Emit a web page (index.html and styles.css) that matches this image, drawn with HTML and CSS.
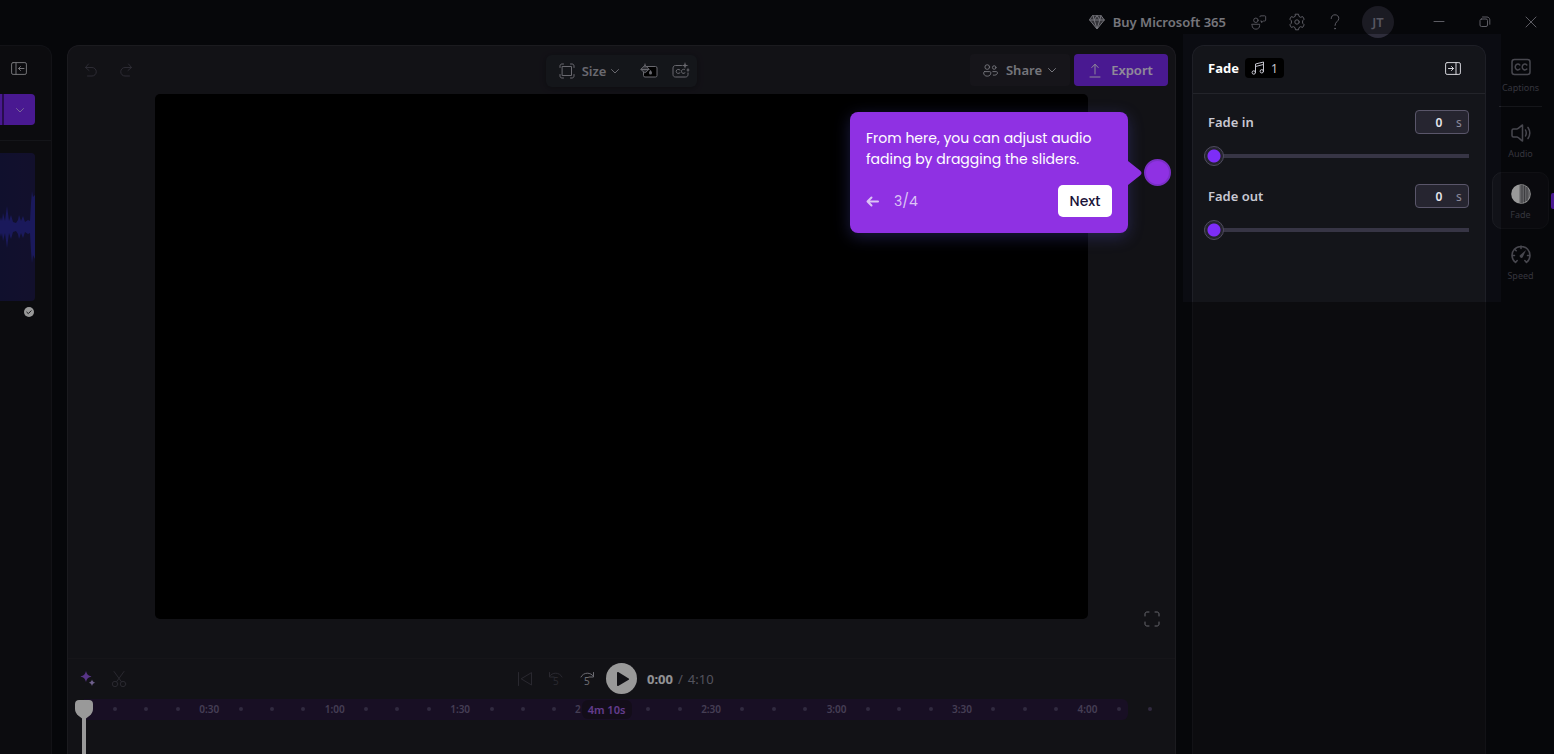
FILE: index.html
```html
<!DOCTYPE html>
<html lang="en">
<head>
  <meta charset="UTF-8">
  <title>Video Editor | Fade</title>
  <link rel="stylesheet" href="styles.css">
</head>
<body>
  <header class="topbar">
    <a class="buy" href="#">
      <svg width="16" height="16" viewBox="0 0 16 16"><path d="M4 1.5h8L15.300 6 8 15 .7 6z"/><path d="M.7 6h14.600M4 1.500L5.200 6 8 15l2.800-9L12 1.500M5.200 6L8 1.500 10.800 6"/></svg>
      Buy Microsoft 365
    </a>
    <button class="top-icon" aria-label="Feedback">
      <svg width="16" height="17" viewBox="0 0 18 18"><circle cx="5.500" cy="6.500" r="2.500"/><path d="M1.200 11h8.500v1.500c0 2.500-1.800 4-4.200 4s-4.300-1.500-4.300-4z"/><path d="M10 2.500c0-.6.4-1 1-1h4.500c.6 0 1 .4 1 1v3.800c0 .6-.4 1-1 1h-1.300L11.800 9V7.300H11"/></svg>
    </button>
    <button class="top-icon" aria-label="Settings">
      <svg width="18" height="18" viewBox="0 0 18 18"><path d="M7.500 1.200h3l.5 2.200 1.500.9 2.200-.7 1.500 2.600-1.600 1.600v2.400l1.600 1.600-1.500 2.600-2.200-.7-1.500.9-.5 2.200h-3L7 14.600l-1.500-.9-2.200.7-1.500-2.600 1.600-1.600V7.800L1.800 6.200l1.500-2.600 2.200.7L7 3.400z"/><circle cx="9" cy="9" r="2.200"/></svg>
    </button>
    <button class="top-icon" aria-label="Help">
      <svg width="18" height="18" viewBox="0 0 18 18"><path d="M5.200 5.500c0-2.200 1.500-3.700 3.800-3.700s3.800 1.500 3.800 3.600c0 3-3.800 3.300-3.800 7"/><circle cx="9" cy="15.600" r=".5"/></svg>
    </button>
    <button class="avatar">JT</button>
    <button class="win" aria-label="Minimize"><svg width="12" height="12" viewBox="0 0 12 12"><path d="M1 5.500h10"/></svg></button>
    <button class="win" aria-label="Restore"><svg width="12" height="12" viewBox="0 0 12 12"><rect x="1" y="3" width="7.500" height="7.500" rx="1.500"/><path d="M3.500 1h4.500c1.500 0 2.800 1.200 2.800 2.800v4.500"/></svg></button>
    <button class="win" aria-label="Close"><svg width="12" height="12" viewBox="0 0 12 12"><path d="M1 1l10 10M11 1L1 11"/></svg></button>
  </header>

  <div class="workspace">
    <aside class="media">
      <div class="media-head">
        <button class="icon-btn" aria-label="Collapse panel">
          <svg width="16" height="13" viewBox="0 0 16 13"><rect x=".6" y=".6" width="14.800" height="11.800" rx="1.500"/><path d="M5 .6v11.800M13 6.500H7.500M9.500 4.500l-2 2 2 2"/></svg>
        </button>
      </div>
      <div class="import">
        <button class="import-more" aria-label="Import options"><svg width="10" height="10" viewBox="0 0 10 10"><path d="M1.500 3.500L5 7l3.500-3.500"/></svg></button>
      </div>
      <div class="clip">
        <svg width="35" height="148" viewBox="0 0 35 148"><path d="M0 68L1 64 2 68 3 60 5 68 7 53 9 68 11 62 13 69 16 70 18 67 19 62 21 68 23 63 25 69 28 67 30 68 31 50 32 38 33 44 35 42V106L33 102 32 110 31 98 30 80 28 81 25 79 23 85 21 80 19 86 18 81 16 78 13 79 11 86 9 80 7 95 5 80 3 88 2 80 1 84 0 80z"/></svg>
      </div>
      <svg class="check" width="10" height="10" viewBox="0 0 10 10"><circle cx="5" cy="5" r="5"/><path d="M2.800 5.200l1.500 1.400 2.800-2.800"/></svg>
    </aside>

    <main class="editor">
      <div class="editor-head">
        <div class="history">
          <button class="square off" aria-label="Undo"><svg width="14" height="14" viewBox="0 0 14 14"><path d="M4.500 1L1.500 4.500l3.500 3M1.500 4.500h6.500a4.200 4.200 0 0 1 0 8.500H3.500"/></svg></button>
          <button class="square off" aria-label="Redo"><svg width="14" height="14" viewBox="0 0 14 14"><path d="M9.500 1l3 3.500-3.500 3M12.500 4.500H6a4.200 4.200 0 0 0 0 8.500h4.500"/></svg></button>
        </div>
        <div class="tools">
          <button class="size">
            <svg width="16" height="16" viewBox="0 0 16 16"><rect x="3.500" y="3.500" width="9" height="9"/><path d="M1 4.500V3c0-1.200.8-2 2-2h1.500M11.500 1H13c1.200 0 2 .8 2 2v1.500M15 11.500V13c0 1.200-.8 2-2 2h-1.500M4.500 15H3c-1.200 0-2-.8-2-2v-1.500"/></svg>
            Size
            <svg width="10" height="10" viewBox="0 0 10 10"><path d="M1.500 3.500L5 7l3.500-3.500"/></svg>
          </button>
          <button class="square" aria-label="Background">
            <svg width="18" height="16" viewBox="0 0 18 16"><rect x="3.500" y="3.500" width="13.500" height="10.500" rx="1.500" fill="#000"/><path d="M1.200 6L5 2.200 9 6.200 5.600 9.500c-.4.400-1 .400-1.400 0L1.200 6.800c-.3-.3-.3-.5 0-.8z" fill="#4a4b54"/><path d="M5 4V1M1.500 6.500H9"/><path class="solid" d="M10.500 7c.8 1.200 1.500 2 1.500 2.900a1.500 1.500 0 0 1-3 0c0-.9.7-1.700 1.500-2.900z"/></svg>
          </button>
          <button class="square" aria-label="Auto captions">
            <svg width="18" height="18" viewBox="0 0 18 18"><path d="M9.500 3.500H3.500c-1.400 0-2.500 1-2.500 2.500v6.500C1 14 2 15 3.500 15h10c1.500 0 2.500-1 2.500-2.500v-1.500"/><path d="M8 8c-1.300-1.300-3.800-.8-3.800 1.400S6.700 12 8 10.800M13 10.800c-1.300 1.200-3.500.8-3.500-1.400 0-1.800 1.700-2.600 3-1.900"/><path class="solid" d="M13 0l.8 2.700 2.700.8-2.700.8L13 7l-.8-2.700-2.700-.8 2.700-.8zM16 5.500l.6 1.900 1.400.6-1.400.6-.6 1.900-.6-1.900L14 8l1.400-.6z"/></svg>
          </button>
        </div>
        <div class="actions">
          <button class="share">
            <svg width="15" height="13" viewBox="0 0 16 14"><circle cx="4.500" cy="3.300" r="2.500"/><circle cx="12" cy="3.800" r="1.900"/><path d="M1.800 8.200h5.400c.7 0 1.200.5 1.200 1.200 0 2.200-1.500 3.700-3.900 3.700S.6 11.600.6 9.400c0-.7.500-1.200 1.200-1.200zM10.500 8.200h3.800c.7 0 1.200.5 1.200 1.200 0 2-1.800 3-4.500 2.600"/></svg>
            Share
            <svg class="chev" width="10" height="10" viewBox="0 0 10 10"><path d="M1.500 3.500L5 7l3.500-3.500"/></svg>
          </button>
          <button class="export">
            <svg width="12" height="15" viewBox="0 0 12 15"><path d="M6 11V1.500M2.800 4.500L6 1.200l3.200 3.300M1 14h10"/></svg>
            Export
          </button>
        </div>
      </div>

      <div class="stage">
        <div class="canvas"></div>
        <button class="fullscreen" aria-label="Fullscreen"><svg width="16" height="16" viewBox="0 0 16 16"><path d="M1 5V3c0-1.200.8-2 2-2h2M11 1h2c1.200 0 2 .8 2 2v2M15 11v2c0 1.200-.8 2-2 2h-2M5 15H3c-1.200 0-2-.8-2-2v-2"/></svg></button>
      </div>

      <section class="timeline">
        <div class="transport">
          <div class="transport-left">
            <button class="ctl" aria-label="AI tools"><svg class="sparkle" width="16" height="16" viewBox="0 0 16 16"><path d="M6 0c1 3.500 2 4.500 5.500 5.500C8 6.500 7 7.500 6 11 5 7.500 4 6.500.5 5.500 4 4.500 5 3.500 6 0z"/><path class="light" d="M12 8.500c.6 2 1.200 2.600 3.200 3.200-2 .6-2.600 1.200-3.200 3.200-.6-2-1.200-2.600-3.200-3.200 2-.6 2.600-1.200 3.200-3.200z"/></svg></button>
            <button class="ctl off" aria-label="Split"><svg width="16" height="18" viewBox="0 0 16 18"><circle cx="4" cy="14" r="2.700"/><circle cx="12" cy="14" r="2.700"/><path d="M3 1.500l7.500 10.300M13 1.500L5.500 11.800"/></svg></button>
            <button class="ctl off push" aria-label="Skip to start"><svg width="16" height="16" viewBox="0 0 16 16"><path d="M1.500 1.500v13M14.500 2v12L4.500 8z"/></svg></button>
            <button class="ctl off" aria-label="Back 5 seconds"><svg width="16" height="20" viewBox="0 0 16 20"><path d="M1.500 3.500V8H6M1.500 7.500C4 3 11.500 2.800 14 8"/><text x="5" y="16">5</text></svg></button>
            <button class="ctl" aria-label="Forward 5 seconds"><svg width="16" height="20" viewBox="0 0 16 20"><path d="M14.500 3.500V8H10M14.500 7.500C12 3 4.500 2.800 2 8"/><text x="5" y="16">5</text></svg></button>
          </div>
          <button class="play" aria-label="Play"><svg width="14" height="16" viewBox="0 0 14 16"><path d="M1 1.800v12.400c0 .7.600 1 1.200.7l10.500-6.200c.5-.3.5-1 0-1.300L2.200 1.100C1.600.8 1 1.100 1 1.800z"/></svg></button>
          <div class="time"><b>0:00</b><span>/</span><span>4:10</span></div>
        </div>
        <div class="ruler">
          <div class="range"></div>
          <ol class="ticks" id="ticks"></ol>
          <span class="duration">4m 10s</span>
        </div>
        <div class="playhead">
          <svg width="18" height="20" viewBox="0 0 18 20"><path d="M4 0h10c2.400 0 4 1.600 4 4v5c0 3-1.500 5-3.500 6.800L9 20l-5.500-4.200C1.500 14 0 12 0 9V4c0-2.400 1.600-4 4-4z"/></svg>
        </div>
      </section>
    </main>

    <aside class="props">
      <div class="props-head">
        <h2>Fade</h2>
        <span class="count">
          <svg width="14" height="14" viewBox="0 0 14 14"><path d="M4.500 11.500V3l8-2v9M4.500 5.500l8-2"/><circle cx="2.800" cy="11.500" r="1.700"/><circle cx="10.800" cy="10.300" r="1.700"/></svg>
          1
        </span>
        <button class="icon-btn" aria-label="Collapse panel">
          <svg width="16" height="13" viewBox="0 0 16 13"><rect x=".6" y=".6" width="14.800" height="11.800" rx="1.500"/><path d="M11 .6v11.800M3.500 6.500h5M6.500 4.500l2 2-2 2"/></svg>
        </button>
      </div>
      <div class="field">
        <div class="field-row">
          <label for="fadeIn">Fade in</label>
          <span class="num"><input type="text" id="fadeInValue" value="0" aria-label="Fade in seconds">s</span>
        </div>
        <input type="range" id="fadeIn" min="0" max="5" step="0.1" value="0">
      </div>
      <div class="field">
        <div class="field-row">
          <label for="fadeOut">Fade out</label>
          <span class="num"><input type="text" id="fadeOutValue" value="0" aria-label="Fade out seconds">s</span>
        </div>
        <input type="range" id="fadeOut" min="0" max="5" step="0.1" value="0">
      </div>
    </aside>

    <nav class="rail">
      <button class="rail-item">
        <svg width="20" height="20" viewBox="0 0 20 20"><rect x="1" y="2.500" width="18" height="15" rx="2.500"/><path d="M8.800 8c-1.500-1.600-4.600-1-4.600 2s3.100 3.600 4.600 2M15.800 8c-1.500-1.600-4.600-1-4.600 2s3.100 3.600 4.600 2"/></svg>
        Captions
      </button>
      <hr>
      <button class="rail-item">
        <svg width="20" height="20" viewBox="0 0 20 20"><path d="M11.500 2v16c-2-1-3.500-3.700-5.500-4H2.500c-.9 0-1.500-.6-1.500-1.500v-5C1 6.600 1.600 6 2.500 6H6c2-.3 3.500-3 5.500-4zM14.500 7c1 2 1 4 0 6M17 4.500c2.300 3.500 2.300 7.500 0 11"/></svg>
        Audio
      </button>
      <button class="rail-item active">
        <svg width="20" height="20" viewBox="0 0 20 20"><circle cx="10" cy="10" r="9.800"/><path class="shade" d="M8.500 1.200A9 9 0 0 1 10 1a9 9 0 0 1 0 18 9 9 0 0 1-1.500-.2z"/><path d="M11 1v18M13.500 2v16M16 3.500v13"/></svg>
        Fade
      </button>
      <button class="rail-item">
        <svg width="20" height="20" viewBox="0 0 20 20"><path d="M4.500 17.500a9 9 0 1 1 11 0l-1.700-2M4.500 17.500l1.700-2M10 1v2.500M3.500 4l1.700 1.700M1 10.500h2.500M16.500 10.500H19"/><path class="needle" d="M15 5l-3.300 7.300c-1 1.500-3.500.3-3-1.700z"/></svg>
        Speed
      </button>
    </nav>
  </div>

  <!-- guided tour -->
  <div class="spotlight"></div>
  <div class="tour" role="dialog" aria-label="Tour step">
    <p>From here, you can adjust audio fading by dragging the sliders.</p>
    <div class="tour-foot">
      <button class="back" aria-label="Previous step"><svg width="13" height="11" viewBox="0 0 13 11"><path d="M12 5.500H1.500M5.500 1.500l-4 4 4 4"/></svg></button>
      <span>3/4</span>
      <button class="next">Next</button>
    </div>
    <svg class="arrow" width="14" height="24" viewBox="0 0 14 24"><path d="M0 0l12 9.500c2 1.500 2 3.500 0 5L0 24z"/></svg>
  </div>
  <div class="hotspot"></div>

  <script>
    // one cell per 7.5 seconds, every fourth one carries a time
    const ticks = document.getElementById("ticks");
    for (let i = 0; i < 35; i++) {
      const li = document.createElement("li");
      if (i === 16) {
        // the duration badge sits over the rest of this one
        li.textContent = "2";
        li.className = "cut";
      } else if (i > 0 && i % 4 === 0) {
        const sec = i * 7.5;
        li.textContent = Math.floor(sec / 60) + ":" + String(sec % 60).padStart(2, "0");
      } else if (i > 0) {
        li.className = "dot";
      }
      ticks.appendChild(li);
    }

    ["fadeIn", "fadeOut"].forEach(function (id) {
      const slider = document.getElementById(id);
      slider.addEventListener("input", function () {
        document.getElementById(id + "Value").value = slider.value;
      });
    });
  </script>
</body>
</html>
```

FILE: styles.css
```css
* {
  box-sizing: border-box;
}

body {
  margin: 0;
  height: 100vh;
  overflow: hidden;
  position: relative;
  display: flex;
  flex-direction: column;
  background: #0b0c12;
  color: #fff;
  font-family: 'Segoe UI', 'Noto Sans', sans-serif;
  font-size: 13px;
}

button {
  display: flex;
  align-items: center;
  justify-content: center;
  padding: 0;
  border: none;
  background: none;
  color: inherit;
  font: inherit;
  cursor: pointer;
}

svg {
  display: block;
  flex: none;
  fill: none;
  stroke: currentColor;
  stroke-linecap: round;
  stroke-linejoin: round;
}

/* top bar */
.topbar {
  flex: none;
  display: flex;
  align-items: center;
  justify-content: flex-end;
  height: 45px;
  padding-bottom: 1px;
  color: #9a9aa6;
}

.buy {
  display: flex;
  align-items: center;
  gap: 8px;
  margin-right: 14px;
  color: #c4c4ce;
  font-weight: 600;
  text-decoration: none;
}

.buy svg {
  fill: #55555e;
}

.top-icon {
  width: 38px;
  height: 32px;
}

.avatar {
  width: 32px;
  height: 32px;
  margin: 0 22px 0 8px;
  border-radius: 50%;
  background: #2e2d3b;
  color: #9090a0;
  font-weight: 600;
}

.win {
  width: 46px;
  height: 32px;
}

/* layout */
.workspace {
  flex: 1;
  min-height: 0;
  display: flex;
}

.media,
.props {
  flex: none;
  background: #14151a;
  border: 1px solid #1e1f26;
  border-bottom: none;
}

.media {
  width: 52px;
  margin-right: 15px;
  border-left: none;
  border-radius: 0 12px 0 0;
}

.media-head {
  display: flex;
  align-items: center;
  height: 48px;
  padding: 0 0 3px 11px;
  color: #c0c0c6;
}

.import {
  height: 47px;
  padding-right: 16px;
  border-bottom: 1px solid #22232a;
}

.import-more {
  width: 35px;
  height: 31px;
  padding-left: 4px;
  border-radius: 0 4px 4px 0;
  background: linear-gradient(90deg, #7b2bf2 2px, #431683 2px, #431683 4px, #7b2bf2 4px);
  color: #c9a8ff;
}

.clip {
  width: 35px;
  height: 148px;
  margin-top: 12px;
  border-radius: 0 4px 4px 0;
  overflow: hidden;
  background: linear-gradient(90deg, #1c1b4c, #1f1c4a);
}

.clip svg {
  fill: #2c2b98;
  stroke: none;
}

.check {
  margin: 6px 0 0 24px;
  fill: #fff;
  stroke: none;
}

.check path {
  fill: none;
  stroke: #22232a;
}

/* editor */
.editor {
  flex: 1;
  min-width: 0;
  display: flex;
  flex-direction: column;
  background: #1f1e26;
  border: 1px solid #2e2d35;
  border-bottom: none;
  border-radius: 12px 12px 0 0;
}

.editor-head {
  display: grid;
  grid-template-columns: 1fr auto 1fr;
  align-items: center;
  height: 48px;
  padding: 0 7px;
}

.history {
  display: flex;
  gap: 3px;
}

.square {
  width: 32px;
  height: 32px;
}

.off {
  color: #4a4956;
}

.tools {
  display: flex;
  margin-top: 2px;
  border-radius: 6px;
  background: #22252c;
  color: #b0b0ba;
  box-shadow: 0 1px 6px rgba(0, 0, 0, 0.3);
}

.size {
  gap: 7px;
  width: 87px;
  height: 32px;
  font-weight: 600;
}

.size svg:last-child,
.chev {
  margin-left: -3px;
}

.solid {
  fill: currentColor;
  stroke: none;
}

.actions {
  display: flex;
  justify-content: flex-end;
  gap: 4px;
}

.share,
.export {
  gap: 8px;
  height: 32px;
  border-radius: 4px;
  font-weight: 600;
}

.share {
  width: 100px;
  background: #25242c;
  color: #c4c4ce;
}

.export {
  gap: 10px;
  width: 94px;
  background: #7b2bf2;
  color: #f0e6ff;
}

.stage {
  position: relative;
  padding: 0 87px 39px;
}

.canvas {
  aspect-ratio: 16 / 9;
  border-radius: 5px;
  background: #000;
}

.fullscreen {
  position: absolute;
  right: 15px;
  bottom: 31px;
  color: #aaaab4;
}

/* timeline */
.timeline {
  position: relative;
  flex: 1;
  border-top: 1px solid #25242b;
}

.transport {
  display: grid;
  grid-template-columns: 1fr auto 1fr;
  align-items: center;
  height: 40px;
}

.transport-left {
  display: flex;
  padding: 0 4px;
  color: #b4b4be;
}

.ctl {
  width: 31px;
  height: 31px;
}

.ctl.off {
  color: #45444f;
}

.ctl text {
  fill: currentColor;
  stroke: none;
  font-size: 10px;
}

.push {
  margin-left: auto;
}

.sparkle {
  fill: #9257e0;
  stroke: none;
}

.sparkle .light {
  fill: #b9a0ea;
}

.play {
  width: 31px;
  height: 31px;
  border-radius: 50%;
  background: #fff;
}

.play svg {
  margin-left: 3px;
  fill: #1f1e26;
  stroke: none;
}

.time {
  display: flex;
  gap: 5px;
  padding-left: 10px;
  color: #8a8a9a;
}

.time b {
  color: #f4f4f8;
}

.ruler {
  position: relative;
  height: 21px;
  padding-right: 9px;
}

.range {
  position: absolute;
  inset: 0 47px 0 16px;
  border-radius: 0 6px 6px 0;
  background: #29193c;
}

.ticks {
  position: relative;
  display: grid;
  grid-template-columns: repeat(35, minmax(0, 1fr));
  margin: 0;
  padding: 0;
  list-style: none;
  line-height: 21px;
  font-size: 10px;
  font-weight: 600;
  color: #74688c;
}

.ticks li {
  display: flex;
  align-items: center;
  justify-content: center;
}

.ticks .cut {
  justify-content: flex-start;
  padding-left: 5px;
}

.dot::before {
  content: "";
  width: 4px;
  height: 4px;
  border-radius: 50%;
  background: #51466a;
}

.duration {
  position: absolute;
  top: 1px;
  left: calc(50% - 40px);
  width: 50px;
  border-radius: 6px;
  background: #20172b;
  color: #a865e8;
  font-size: 11px;
  font-weight: 600;
  line-height: 19px;
  text-align: center;
}

.playhead {
  position: absolute;
  top: 41px;
  bottom: 0;
  left: 7px;
  width: 18px;
  background: linear-gradient(#fff, #fff) center / 4px 100% no-repeat;
}

.playhead svg {
  fill: #fff;
  stroke: none;
}

/* properties panel */
.props {
  width: 294px;
  margin-left: 16px;
  border-radius: 12px 12px 0 0;
}

.props-head {
  display: flex;
  align-items: center;
  height: 48px;
  padding: 0 24px 3px 15px;
  border-bottom: 1px solid #23242a;
}

.props-head h2 {
  margin: 0 6px 0 0;
  font-size: 13px;
}

.props-head .icon-btn {
  margin-left: auto;
  color: #d4d4da;
}

.count {
  display: flex;
  align-items: center;
  gap: 6px;
  height: 20px;
  padding: 0 6px;
  border-radius: 4px;
  background: #000;
  color: #c4c4ce;
  font-size: 12px;
}

.field {
  height: 74px;
  padding: 16px 16px 0 15px;
}

.field-row {
  display: flex;
  align-items: center;
  justify-content: space-between;
  height: 24px;
  color: #c8c8d2;
}

.field label {
  font-weight: 600;
}

.num {
  display: flex;
  align-items: center;
  width: 54px;
  height: 24px;
  padding-right: 6px;
  border: 1px solid #5a566a;
  border-radius: 4px;
  background: #262530;
  color: #8c8a9c;
  font-size: 12px;
}

.num input {
  width: 40px;
  padding: 0 0 0 6px;
  border: none;
  background: none;
  color: #e4e4ea;
  font: inherit;
  font-weight: 600;
  text-align: center;
}

input[type="range"] {
  -webkit-appearance: none;
  appearance: none;
  display: block;
  width: calc(100% + 4px);
  height: 20px;
  margin: 12px 0 0 -4px;
  background: linear-gradient(#373545, #373545) center / 100% 4px no-repeat;
}

input[type="range"]::-webkit-slider-thumb {
  -webkit-appearance: none;
  width: 20px;
  height: 20px;
  border: 1px solid #4f4c5e;
  border-radius: 50%;
  background: radial-gradient(circle, #7d2df8 6px, #24232e 7px);
}

/* right rail */
.rail {
  flex: none;
  display: flex;
  flex-direction: column;
  gap: 4px;
  width: 68px;
  padding: 0 5px 0 6px;
}

.rail hr {
  width: 43px;
  height: 1px;
  margin: 0 auto;
  border: none;
  background: #24252c;
}

.rail-item {
  position: relative;
  flex-direction: column;
  gap: 4px;
  height: 57px;
  padding-top: 4px;
  border: 1px solid transparent;
  border-radius: 10px;
  color: #595966;
  font-size: 9px;
}

.rail-item svg {
  color: #777783;
  stroke-width: 1.5;
}

.rail-item.active {
  background: #111218;
  border-color: #1b1c22;
}

.rail-item.active svg {
  fill: #fff;
  stroke: #66666c;
  stroke-width: 1;
}

.rail-item.active circle {
  stroke: none;
}

.shade {
  fill: #a4a4a8;
  stroke: none;
}

.rail-item.active::after {
  content: "";
  position: absolute;
  top: 20px;
  right: -6px;
  width: 3px;
  height: 16px;
  border-radius: 2px 0 0 2px;
  background: #7b2bf2;
}

.needle {
  fill: currentColor;
  stroke: none;
}

/* tour */
.spotlight {
  position: absolute;
  top: 34px;
  right: 53px;
  width: 318px;
  height: 268px;
  box-shadow: 0 0 0 9999px rgba(0, 0, 0, 0.4);
  pointer-events: none;
}

.tour {
  position: absolute;
  top: 112px;
  right: 426px;
  width: 278px;
  padding: 16px;
  border-radius: 8px;
  background: #8f31e3;
  box-shadow: 0 4px 16px rgba(90, 90, 220, 0.3);
  font-family: Poppins, Inter, sans-serif;
  font-size: 14px;
  line-height: 21px;
}

.tour p {
  margin: 0 0 15px;
}

.tour-foot {
  display: flex;
  align-items: center;
  gap: 15px;
  color: #dcc4f5;
}

.back svg {
  stroke-width: 2;
}

.next {
  width: 54px;
  height: 32px;
  margin-left: auto;
  border-radius: 5px;
  background: #fff;
  color: #1a1238;
  font-weight: 500;
}

.arrow {
  position: absolute;
  top: 49px;
  left: 100%;
  fill: #8f31e3;
  stroke: none;
}

.hotspot {
  position: absolute;
  top: 159px;
  right: 383px;
  width: 27px;
  height: 27px;
  border: 2px solid #7a2fc6;
  border-radius: 50%;
  background: #8f31e3;
}
```
